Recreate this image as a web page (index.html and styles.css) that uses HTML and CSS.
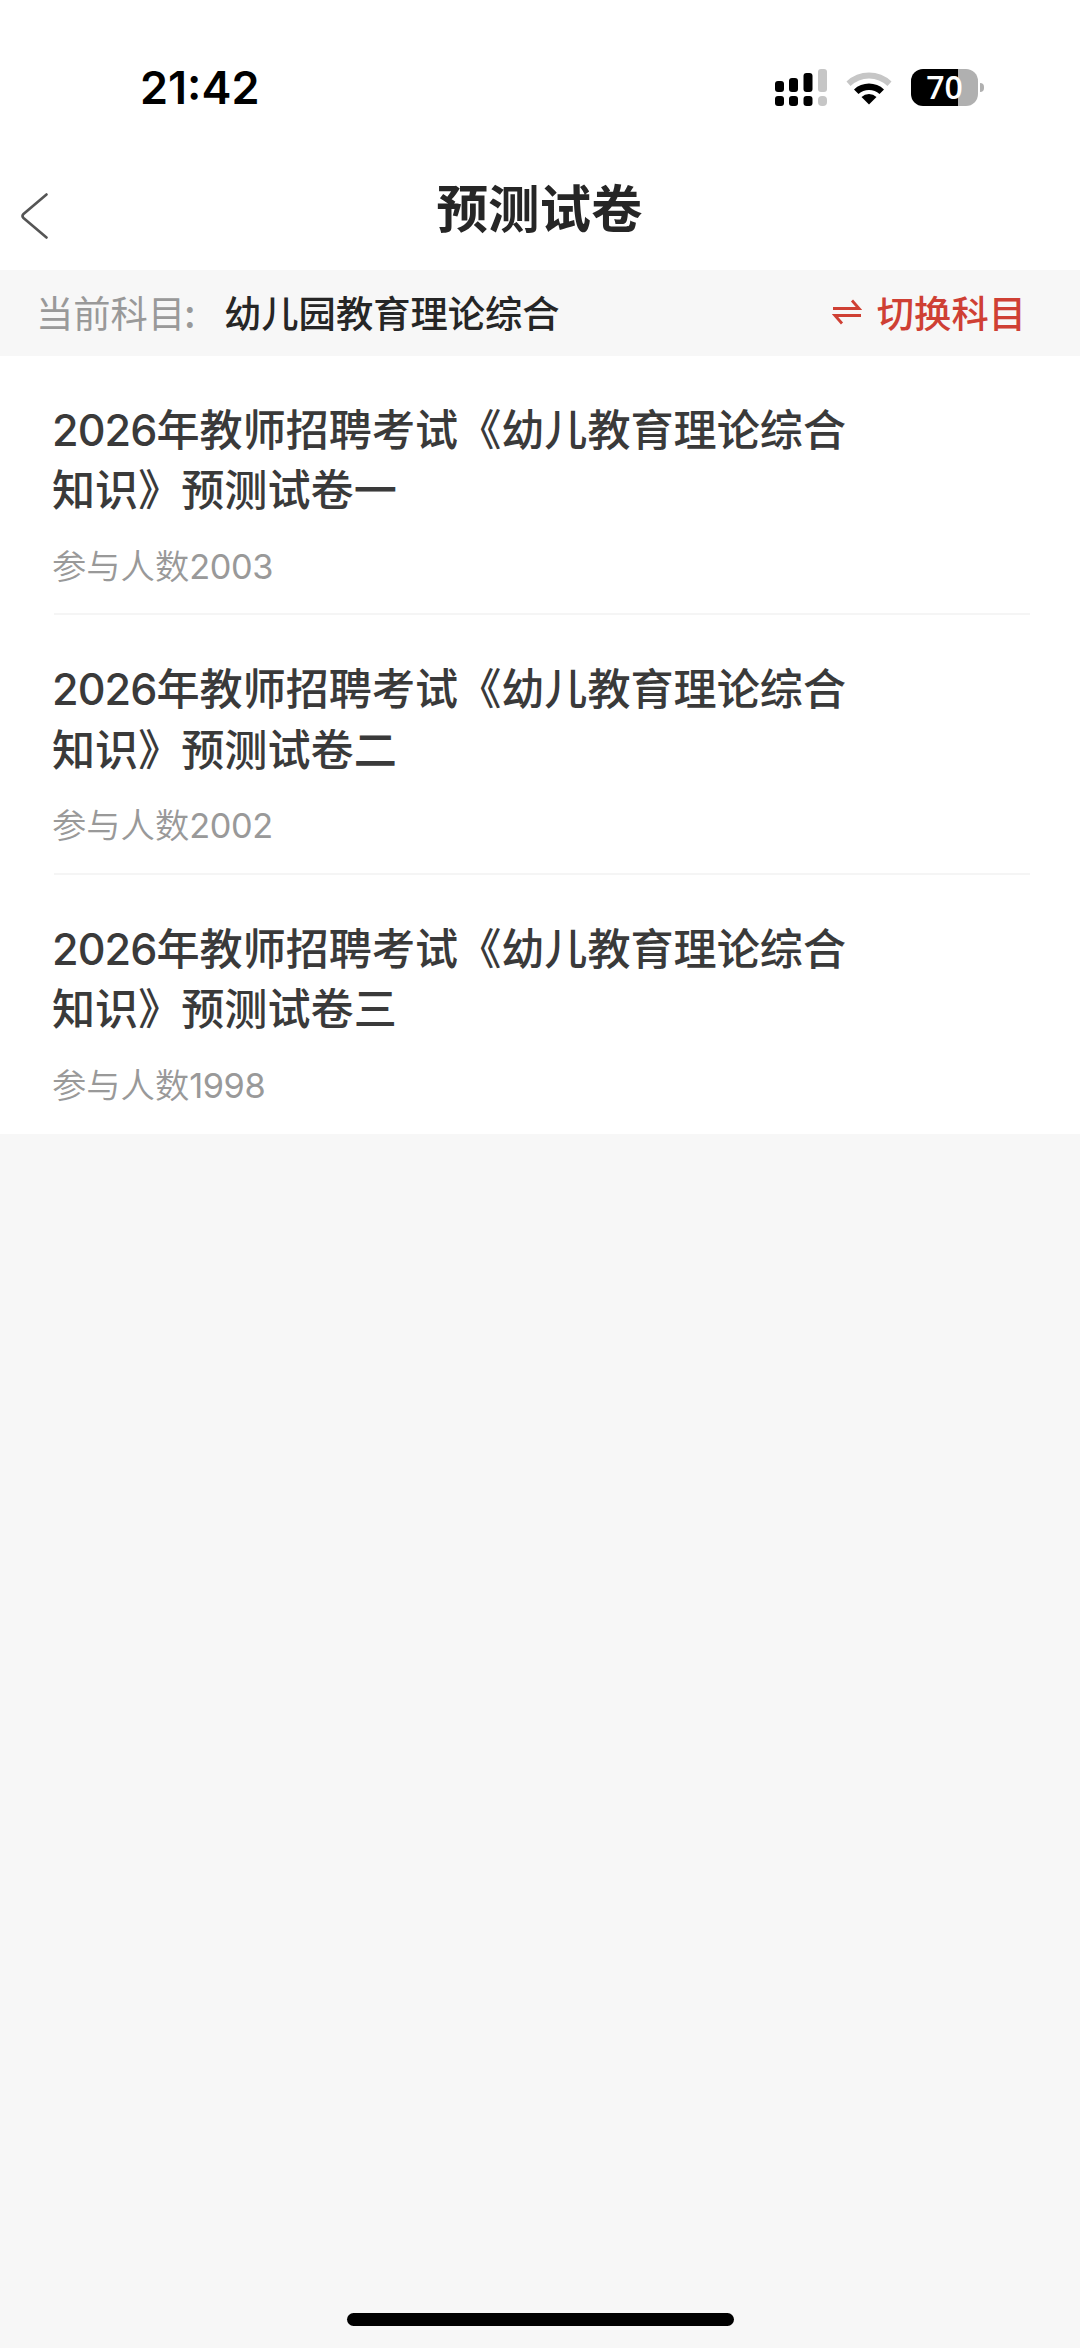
FILE: index.html
```
<!DOCTYPE html>
<html lang="zh-CN">
<head>
    <meta charset="UTF-8">
    <meta name="viewport" content="width=device-width, initial-scale=1.0">
    <title>预测试卷</title>
    <link rel="stylesheet" href="styles.css">
</head>
<body>
    <div class="status-bar">
        <div class="time">21:42</div>
        <div class="status-icons">
            <svg class="signal" width="53" height="38" viewBox="0 0 53 38">
                <rect x="0" y="12" width="9" height="11" rx="3"/>
                <rect x="14" y="9" width="9" height="14" rx="3"/>
                <rect x="28.500" y="4" width="9" height="19" rx="3"/>
                <rect class="off" x="43" y="0" width="9" height="23" rx="3"/>
                <rect x="0" y="27" width="9" height="10" rx="3"/>
                <rect x="14" y="27" width="9" height="10" rx="3"/>
                <rect x="28.500" y="27" width="9" height="10" rx="3"/>
                <rect class="off" x="43" y="27" width="9" height="10" rx="4"/>
            </svg>
            <svg class="wifi" width="46" height="34" viewBox="0 0 46 34">
                <path class="off" d="M.5 10.500a32.500 32.500 0 0 1 45 0l-4 4.500a26.500 26.500 0 0 0-37 0z"/>
                <path d="M8 18.500a22 22 0 0 1 30 0l-4.500 4.500a15.500 15.500 0 0 0-21 0z"/>
                <path d="M15.500 26a11 11 0 0 1 15 0l-7.500 7.500z"/>
            </svg>
            <div class="battery">
                <div class="battery-body"><span>70</span></div>
                <div class="battery-cap"></div>
            </div>
        </div>
    </div>
    <header>
        <svg class="back" width="30" height="50" viewBox="0 0 30 50">
            <path d="M26.500 3.500 3.500 23q-2 2 0 4l23 19.500"/>
        </svg>
        <h1>预测试卷</h1>
    </header>
    <div class="subject">
        <span class="label">当前科目<i>:</i></span>
        <span class="name">幼儿园教育理论综合</span>
        <div class="switch">
            <svg width="30" height="28" viewBox="0 0 30 28">
                <path d="M1 10.500h26l-7-8M29 17.500H3l7 8"/>
            </svg>
            切换科目
        </div>
    </div>
    <div class="papers">
        <div class="paper">
            <h2><b>2026</b>年教师招聘考试《幼儿教育理论综合<br>知识》预测试卷一</h2>
            <p>参与人数<b>2003</b></p>
        </div>
        <div class="paper">
            <h2><b>2026</b>年教师招聘考试《幼儿教育理论综合<br>知识》预测试卷二</h2>
            <p>参与人数<b>2002</b></p>
        </div>
        <div class="paper">
            <h2><b>2026</b>年教师招聘考试《幼儿教育理论综合<br>知识》预测试卷三</h2>
            <p>参与人数<b>1998</b></p>
        </div>
    </div>
    <div class="home-bar"></div>
</body>
</html>
```

FILE: styles.css
```
* {
    box-sizing: border-box;
}

body {
    display: flex;
    flex-direction: column;
    height: 2348px;
    margin: 0;
    background-color: #f7f7f7;
    color: #3a3a3a;
    font-family: "Noto Sans CJK SC", sans-serif;
}

.status-bar {
    display: flex;
    justify-content: space-between;
    height: 170px;
    padding: 69px 96px 0 140px;
    background-color: #ffffff;
}

.time {
    font-family: Inter, sans-serif;
    font-size: 45px;
    font-weight: 600;
    line-height: 38px;
    color: #000000;
}

.status-icons {
    display: flex;
}

.signal {
    margin-right: 18px;
}

.wifi {
    margin: 2px 19px 0 0;
}

.off {
    fill: #c6c6c6;
}

.battery {
    display: flex;
    align-items: center;
    height: 37px;
}

.battery-body {
    width: 67px;
    height: 37px;
    border-radius: 12px;
    background: linear-gradient(to right, #000000 47px, #b0b0b0 47px);
    color: #ffffff;
    font-family: "Open Sans", sans-serif;
    font-size: 32px;
    font-weight: 600;
    line-height: 36px;
    text-align: center;
}

.battery-cap {
    width: 4px;
    height: 9px;
    margin-left: 2px;
    border-radius: 0 4px 4px 0;
    background-color: #b0b0b0;
}

header {
    display: flex;
    align-items: center;
    height: 100px;
    padding: 0 20px;
    background-color: #ffffff;
}

.back {
    margin-top: -8px;
    fill: none;
    stroke: #555555;
    stroke-width: 2.6;
    stroke-linecap: round;
}

h1 {
    flex: 1;
    margin: -28px 31px 0 0;
    font-size: 51.5px;
    font-weight: 700;
    line-height: 60px;
    text-align: center;
    color: #262626;
}

.subject {
    display: flex;
    align-items: center;
    height: 86px;
    padding: 0 54px 2px 36px;
    font-size: 37.3px;
    font-weight: 500;
    line-height: 84px;
}

.label {
    width: 188px;
    color: #999999;
    font-weight: 400;
}

.label i {
    margin-left: -1px;
    font-style: normal;
    font-weight: 500;
}

.name {
    flex: 1;
    color: #262626;
}

.switch {
    display: flex;
    align-items: center;
    gap: 15px;
    color: #cf4034;
}

.switch svg {
    fill: none;
    stroke: #cf4034;
    stroke-width: 2.8;
}

.papers {
    background-color: #ffffff;
}

.paper {
    position: relative;
    height: 259.4px;
    padding: 41px 52px 0;
}

.paper:not(:last-child)::after {
    content: "";
    position: absolute;
    right: 50px;
    bottom: 0;
    left: 54px;
    height: 2px;
    background-color: #f5f5f5;
}

h2 {
    margin: 0;
    font-size: 43.1px;
    font-weight: 500;
    line-height: 60.4px;
}

h2 b {
    font-family: Inter, sans-serif;
    font-weight: 500;
    line-height: 1;
    letter-spacing: -0.9px;
}

p {
    margin: 21px 0 0;
    color: #999999;
    font-size: 34.3px;
    font-weight: 350;
    line-height: 50px;
}

p b {
    font-family: Inter, sans-serif;
    font-weight: 400;
    line-height: 1;
    letter-spacing: -0.4px;
}

.home-bar {
    width: 387px;
    height: 13px;
    margin: auto auto 22px;
    border-radius: 7px;
    background-color: #000000;
}
```
